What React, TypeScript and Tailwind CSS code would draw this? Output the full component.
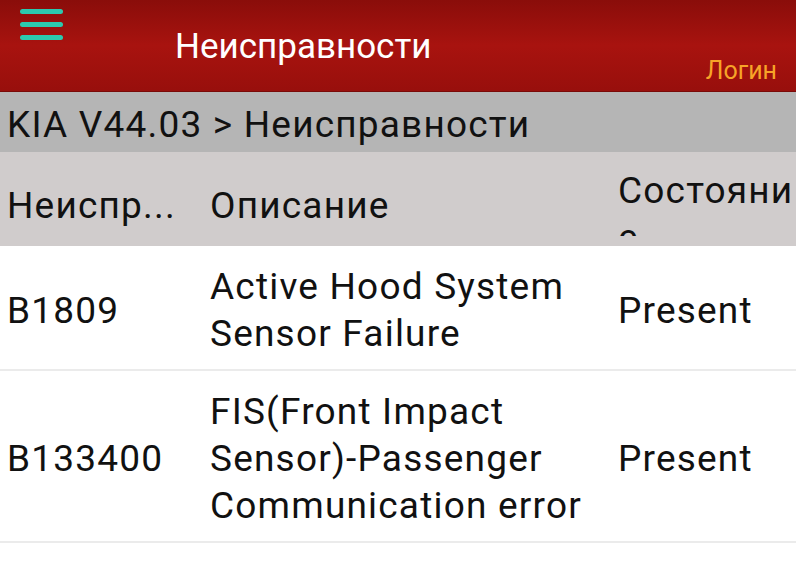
const rows = [
  { code: 'B1809', desc: ['Active Hood System', 'Sensor Failure'], state: 'Present' },
  { code: 'B133400', desc: ['FIS(Front Impact', 'Sensor)-Passenger', 'Communication error'], state: 'Present' },
]

const App = () => {
  return (
    <div className="min-h-[575px] w-[796px] overflow-hidden bg-white text-[#111] font-['Roboto',sans-serif]">
      <header className="relative h-[92px] border-b border-[#7a0b08] bg-gradient-to-b from-[#8a0d0a] via-[#a8130f] to-[#980f0c]">
        <div className="absolute left-[20px] top-[9px] flex w-[43px] flex-col gap-[8px]">
          <span className="h-[5px] rounded-full bg-[#2cc9ae]" />
          <span className="h-[5px] rounded-full bg-[#2cc9ae]" />
          <span className="h-[5px] rounded-full bg-[#2cc9ae]" />
        </div>
        <h1 className="absolute left-[175px] top-[25px] text-[35px] leading-[44px] text-white">Неисправности</h1>
        <span className="absolute right-[19px] top-[56px] text-[25px] leading-[30px] text-[#f7a428]">Логин</span>
      </header>

      <div className="h-[60px] bg-[#b5b5b5] pl-[7px] pt-[9px] text-[37px] leading-[47px] tracking-[1.2px]">KIA V44.03 &gt; Неисправности</div>

      <div className="grid h-[94px] grid-cols-[210px_408px_178px] bg-[#d0cccc] text-[37px] leading-[47px] tracking-[1.2px]">
        <div className="pl-[7px] pt-[30px]">Неиспр...</div>
        <div className="pt-[30px]">Описание</div>
        <div className="pt-[15px]">
          <div className="h-[69px] overflow-hidden break-all">Состояни е</div>
        </div>
      </div>

      {rows.map((r) => (
        <div
          key={r.code}
          className="grid grid-cols-[210px_408px_178px] border-b-2 border-[#ebebeb] pt-[17px] pb-[12px] text-[37px] leading-[47px] tracking-[1.2px]"
        >
          <div className="flex items-center pl-[7px]">{r.code}</div>
          <div>
            {r.desc.map((d) => (
              <div key={d}>{d}</div>
            ))}
          </div>
          <div className="flex items-center">{r.state}</div>
        </div>
      ))}
    </div>
  )
}

export default App
